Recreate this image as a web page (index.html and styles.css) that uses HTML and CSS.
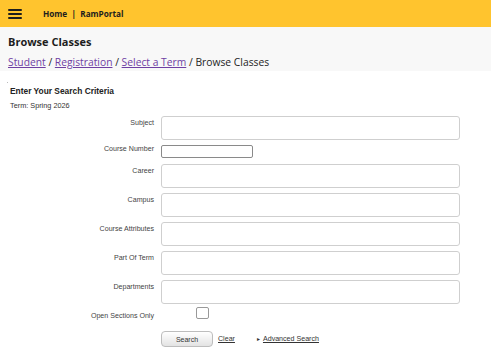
FILE: index.html
```html
<!DOCTYPE html>
<html lang="en">
<head>
    <meta charset="UTF-8">
    <meta name="viewport" content="width=device-width, initial-scale=1.0">
    <title>Browse Classes</title>
    <link rel="stylesheet" href="styles.css">
</head>
<body>

    <header class="topbar">
        <div class="menu-icon">
            <span></span><span></span><span></span>
        </div>
        <div class="top-links">Home &nbsp;|&nbsp; RamPortal</div>
    </header>

    <div class="page-head">
        <h1>Browse Classes</h1>
        <nav class="breadcrumb">
            <a href="#">Student</a> / <a href="#">Registration</a> / <a href="#">Select a Term</a> / Browse Classes
        </nav>
    </div>

    <div class="content">
        <div class="dot"></div>
        <h2>Enter Your Search Criteria</h2>
        <p class="term">Term: Spring 2026</p>

        <form class="search-form">
            <label>Subject</label>
            <input type="text" class="field">

            <label class="tight">Course Number</label>
            <input type="text" class="field small">

            <label>Career</label>
            <input type="text" class="field">

            <label>Campus</label>
            <input type="text" class="field">

            <label>Course Attributes</label>
            <input type="text" class="field">

            <label>Part Of Term</label>
            <input type="text" class="field">

            <label>Departments</label>
            <input type="text" class="field">

            <label>Open Sections Only</label>
            <div class="check-cell"><input type="checkbox" class="check"></div>

            <span></span>
            <div class="actions">
                <button type="button" class="search-btn">Search</button>
                <a href="#" class="clear">Clear</a>
                <span class="arrow">&#9656;</span>
                <a href="#" class="advanced">Advanced Search</a>
            </div>
        </form>
    </div>

</body>
</html>
```

FILE: styles.css
```css
body {
    margin: 0;
    padding: 0;
    background-color: #ffffff;
    font-family: 'Liberation Sans', Arial, sans-serif;
    color: #333;
}
.topbar {
    height: 27px;
    background-color: #ffc42e;
    display: flex;
    align-items: center;
    padding-left: 8px;
}
.menu-icon {
    width: 14px;
    display: flex;
    flex-direction: column;
    gap: 2px;
    margin-top: 1px;
}
.menu-icon span {
    display: block;
    height: 2px;
    background-color: #1d1d1d;
    border-radius: 1px;
}
.top-links {
    margin-left: 21px;
    font-family: 'Open Sans', sans-serif;
    font-size: 8.2px;
    font-weight: bold;
    color: #1d1d1d;
}
.page-head {
    background-color: #f8f8f8;
    height: 44px;
    padding: 0 8px;
    font-family: 'Open Sans', sans-serif;
    overflow: hidden;
}
.page-head h1 {
    margin: 7px 0 0;
    font-size: 11px;
    font-weight: bold;
    color: #1d1d1d;
}
.breadcrumb {
    margin-top: 6px;
    font-size: 10.3px;
    color: #1d1d1d;
}
.breadcrumb a {
    color: #6f3fa3;
}
.content {
    padding: 0 10px;
    position: relative;
}
.dot {
    position: absolute;
    left: 7px;
    top: 11px;
    width: 1px;
    height: 1px;
    background-color: #bbb;
}
.content h2 {
    margin: 0;
    padding-top: 15px;
    font-size: 8.4px;
    font-weight: bold;
    color: #222;
}
.term {
    margin: 5px 0 0;
    font-size: 7.3px;
    color: #333;
}
.search-form {
    display: grid;
    grid-template-columns: 144px 299px;
    column-gap: 7px;
    row-gap: 5px;
    margin-top: 6px;
    font-size: 7.1px;
    line-height: 9px;
}
.search-form label {
    text-align: right;
    padding-top: 3px;
    color: #444;
}
.search-form label.tight {
    padding-top: 0;
}
.field {
    box-sizing: border-box;
    width: 299px;
    height: 24px;
    margin: 0;
    border: 1px solid #cfcfcf;
    border-radius: 3px;
    background-color: #fff;
}
.field.small {
    width: 92px;
    height: 13px;
    border-color: #8a8a8a;
    border-radius: 2px;
    margin-bottom: 1px;
}
.check-cell {
    padding-left: 35px;
    margin-top: -2px;
}
.check {
    appearance: none;
    display: block;
    box-sizing: border-box;
    width: 13px;
    height: 12px;
    margin: 0;
    border: 1px solid #999;
    border-radius: 2px;
    background-color: #fff;
}
.actions {
    display: flex;
    align-items: center;
    margin-top: 5px;
}
.search-btn {
    width: 52px;
    height: 16px;
    padding: 0;
    font-family: 'Liberation Sans', Arial, sans-serif;
    font-size: 7px;
    color: #333;
    background: linear-gradient(#ffffff, #e3e3e3);
    border: 1px solid #bdbdbd;
    border-radius: 4px;
}
.clear {
    margin-left: 5px;
    color: #333;
}
.arrow {
    margin-left: 22px;
    font-size: 6px;
    color: #333;
}
.advanced {
    margin-left: 3px;
    color: #333;
}
```
